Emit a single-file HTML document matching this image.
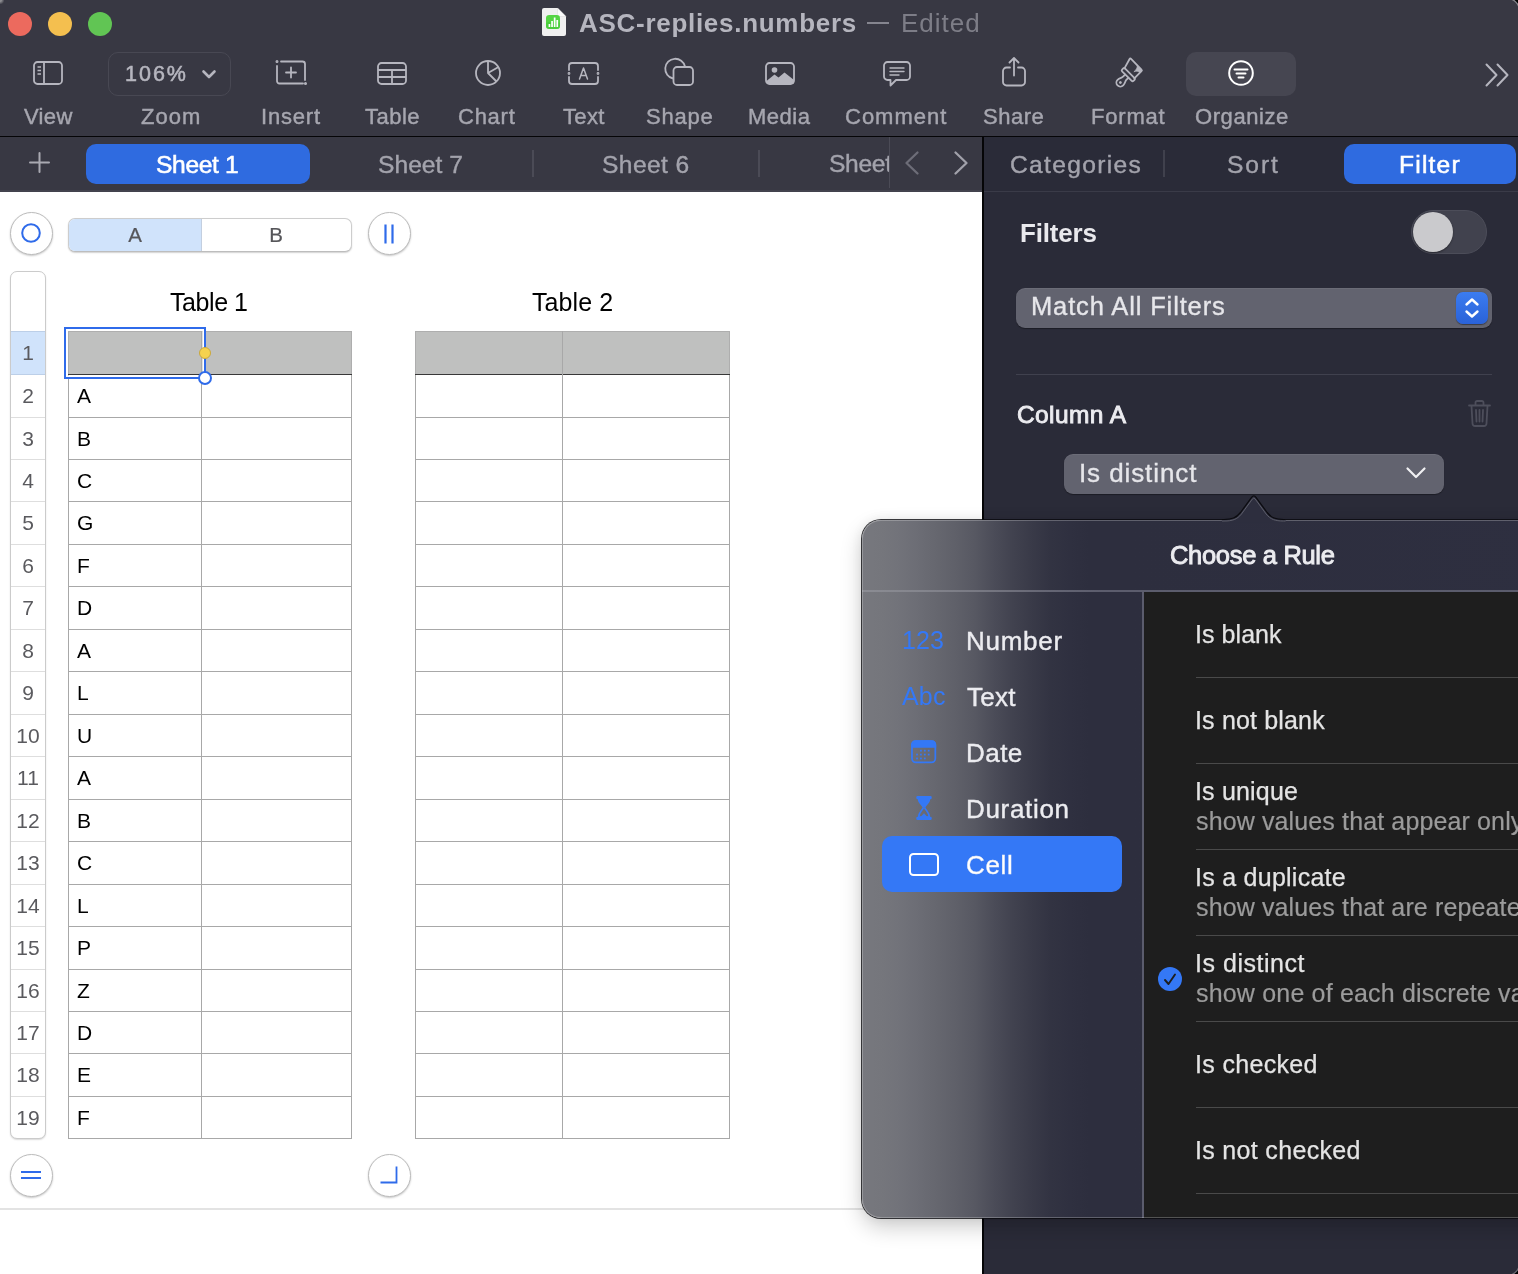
<!DOCTYPE html>
<html><head><meta charset="utf-8"><title>ASC-replies.numbers</title>
<style>
*{box-sizing:border-box;margin:0;padding:0}
html,body{width:1518px;height:1274px;overflow:hidden;background:#fff}
body{font-family:"Liberation Sans",sans-serif;position:relative;-webkit-font-smoothing:antialiased}
.abs{position:absolute}
.t{position:absolute;white-space:nowrap;line-height:1;will-change:transform}
#toolbar{left:0;top:0;width:1518px;height:136px;background:#383843}
#tabbar{left:0;top:137px;width:982px;height:54px;background:#383843}
#canvas{left:0;top:192px;width:982px;height:1082px;background:#fff}
#sidebar{left:984px;top:137px;width:534px;height:1137px;background:#2a2b38}
.tl{position:absolute;top:12px;width:24px;height:24px;border-radius:50%}
.lbl{font-size:22px;color:#a6a6af;top:106px;transform:translateX(-50%);-webkit-text-stroke:0.420px #a6a6af}
.tab{font-size:24.600px;color:#a3a3ac;top:152.600px;-webkit-text-stroke:0.400px #a3a3ac}
#s1,#filt{-webkit-text-stroke:0.550px #fff}
.cbtn{width:43px;height:43px;margin:-0.500px 0 0 -0.500px;border-radius:50%;background:#fff;border:1px solid #bcbcbc;box-shadow:0 1px 2px rgba(0,0,0,.22)}
.hdr{font-size:20.500px;color:#56565a;-webkit-text-stroke:0.200px #56565a}
.rn{font-size:21px;color:#5a5a5e;transform:translateX(-50%)}
.cv{font-size:21px;color:#000}
.ic{font-size:25px;color:#3478f6}
.li{font-size:26px;color:#ececf0;-webkit-text-stroke:0.400px #ececf0}
.ri{left:1196px;font-size:25px;color:#e4e4e4;-webkit-text-stroke:0.250px #e4e4e4}
.rs{left:1196px;letter-spacing:0.130px;font-size:25px;color:#9b9b9b;-webkit-text-stroke:0.200px #9b9b9b}
.sep{left:1196px;width:330px;height:1px;background:#4a4a4a}
svg{position:absolute;overflow:visible}
/*FIT*/
#title{left:579.00px!important;letter-spacing:0.711px;transform:none}
#edited{left:901.00px!important;letter-spacing:1.000px;transform:none}
#lview{left:24.33px!important;letter-spacing:0.333px;transform:none}
#lzoom{left:140.88px!important;letter-spacing:1.000px;transform:none}
#linsert{left:261.47px!important;letter-spacing:0.800px;transform:none}
#ltable{left:364.69px!important;letter-spacing:0.500px;transform:none}
#lchart{left:458.08px!important;letter-spacing:0.750px;transform:none}
#ltext{left:562.80px!important;letter-spacing:0.333px;transform:none}
#lshape{left:646.19px!important;letter-spacing:0.750px;transform:none}
#lmedia{left:748.02px!important;letter-spacing:0.500px;transform:none}
#lcomment{left:845.30px!important;letter-spacing:1.000px;transform:none}
#lshare{left:982.61px!important;letter-spacing:0.500px;transform:none}
#lformat{left:1090.83px!important;letter-spacing:0.800px;transform:none}
#lorganize{left:1195.36px!important;letter-spacing:0.571px;transform:none}
#zoomv{left:125.00px!important;letter-spacing:2.000px;transform:none}
#s1{left:156.00px!important;letter-spacing:-0.333px;transform:none}
#s7{left:378.10px!important;letter-spacing:0.033px;transform:none}
#s6{left:602.00px!important;letter-spacing:0.400px;transform:none}
#cat{left:1010.00px!important;letter-spacing:1.311px;transform:none}
#sort{left:1226.67px!important;letter-spacing:1.933px;transform:none}
#filt{left:1399.38px!important;letter-spacing:1.200px;transform:none}
#filters{left:1019.67px!important;letter-spacing:-0.167px;transform:none}
#maf{left:1031.26px!important;letter-spacing:0.863px;transform:none}
#cola{left:1017.00px!important;letter-spacing:0.400px;transform:none}
#isd{left:1079.00px!important;letter-spacing:0.900px;transform:none}
#car{left:1170.38px!important;letter-spacing:-0.317px;transform:none}
#i123{left:901.67px!important;letter-spacing:0.100px;transform:none}
#lnum{left:966.00px!important;letter-spacing:0.720px;transform:none}
#iabc{left:902.00px!important;letter-spacing:0.200px;transform:none}
#ltxt{left:967.00px!important;letter-spacing:0.267px;transform:none}
#ldat{left:966.00px!important;letter-spacing:0.467px;transform:none}
#ldur{left:966.00px!important;letter-spacing:0.686px;transform:none}
#lcel{left:966.00px!important;letter-spacing:0.667px;transform:none}
#r1{left:1195.00px!important;letter-spacing:0.057px;transform:none}
#r2{left:1195.00px!important;letter-spacing:0.164px;transform:none}
#r3{left:1195.00px!important;letter-spacing:0.175px;transform:none}
#r4{left:1195.00px!important;letter-spacing:0.262px;transform:none}
#r5{left:1195.00px!important;letter-spacing:0.520px;transform:none}
#r6{left:1195.00px!important;letter-spacing:0.333px;transform:none}
#r7{left:1195.00px!important;letter-spacing:0.323px;transform:none}
#t1{left:170.26px!important;letter-spacing:-0.433px;transform:none}
#t2{left:532.00px!important;letter-spacing:0.100px;transform:none}
/*/FIT*/
</style></head><body>
<div id="toolbar" class="abs"></div>
<div class="abs" style="left:0;top:135.500px;width:1518px;height:1.500px;background:#050507"></div>
<div id="tabbar" class="abs"></div>
<div id="canvas" class="abs"></div>
<div id="sidebar" class="abs"></div>
<!--TOOLBAR-->
<div class="tl" style="left:8px;background:#ec6a5e"></div>
<div class="tl" style="left:48px;background:#f4bf4f"></div>
<div class="tl" style="left:88px;background:#61c554"></div>
<!-- doc icon -->
<svg style="left:542px;top:8px" width="24" height="28" viewBox="0 0 24 28"><path d="M2 0h13.500l8.500 8.500v17.500a2 2 0 0 1-2 2h-20a2 2 0 0 1-2-2v-24a2 2 0 0 1 2-2z" fill="#f0f0f0"/><path d="M15.500 0l8.500 8.500h-6.500a2 2 0 0 1-2-2z" fill="#fbfbfb"/><path d="M15.500 6.500v-6.500l8.500 8.500h-6.500a2 2 0 0 1-2-2z" fill="none" stroke="#d8d8d8" stroke-width="0.500"/><rect x="4" y="7" width="14" height="14" rx="3.200" fill="#55d544"/><rect x="4" y="14" width="14" height="7" rx="3.200" fill="#3fc733" opacity="0.500"/><rect x="6.600" y="16" width="1.700" height="3" fill="#fff"/><rect x="9.200" y="13" width="1.700" height="6" fill="#fff"/><rect x="11.800" y="9.500" width="1.700" height="9.500" fill="#fff"/><rect x="14.400" y="12" width="1.700" height="7" fill="#fff"/></svg>
<div class="t" id="title" style="left:578px;top:10px;font-size:26px;font-weight:bold;color:#b5b5be">ASC-replies.numbers</div>
<div class="abs" style="left:867px;top:22px;width:22px;height:2px;background:#85858f"></div>
<div class="t" id="edited" style="left:902px;top:10px;font-size:26px;color:#7d7d87">Edited</div>
<!-- View -->
<svg style="left:33px;top:61px" width="30" height="24" viewBox="0 0 30 24" fill="none" stroke="#b6b6bf" stroke-width="1.800"><rect x="1" y="1" width="28" height="22" rx="3.500"/><path d="M11 1v22"/><path d="M4.500 6h3.500M4.500 9.500h3.500M4.500 13h3.500" stroke-width="1.500"/></svg>
<div class="t lbl" id="lview" style="left:48px">View</div>
<!-- Zoom -->
<div class="abs" style="left:108px;top:52px;width:123px;height:44px;border:1.500px solid #484853;border-radius:10px"></div>
<div class="t" id="zoomv" style="left:125px;top:63.500px;font-size:21.500px;color:#b6b6bf;-webkit-text-stroke:0.550px #b6b6bf">106%</div>
<svg style="left:202px;top:70px" width="14" height="9" viewBox="0 0 14 9" fill="none" stroke="#b6b6bf" stroke-width="2.600" stroke-linecap="round" stroke-linejoin="round"><path d="M1.500 1.500l5.500 5.500 5.500-5.500"/></svg>
<div class="t lbl" id="lzoom" style="left:170px">Zoom</div>
<!-- Insert -->
<svg style="left:276px;top:60px" width="31" height="25" viewBox="0 0 31 25" fill="none" stroke="#b6b6bf" stroke-width="1.800" stroke-linecap="round"><path d="M1 6v15a2.500 2.500 0 0 0 2.500 2.500h23.500M5 1.500h21.500a2.500 2.500 0 0 1 2.500 2.500v16"/><path d="M15 7.500v10M10 12.500h10"/><circle cx="1" cy="1.600" r="0.600" fill="#b6b6bf"/><circle cx="29.500" cy="23.500" r="0.600" fill="#b6b6bf"/></svg>
<div class="t lbl" id="linsert" style="left:292px">Insert</div>
<!-- Table -->
<svg style="left:377px;top:62px" width="30" height="23" viewBox="0 0 30 23" fill="none" stroke="#b6b6bf" stroke-width="1.800"><rect x="1" y="1" width="28" height="21" rx="3.500"/><path d="M1 8h28M1 15h28M15 8v14"/></svg>
<div class="t lbl" id="ltable" style="left:392px">Table</div>
<!-- Chart -->
<svg style="left:475px;top:60px" width="26" height="26" viewBox="0 0 26 26" fill="none" stroke="#b6b6bf" stroke-width="1.800" stroke-linejoin="round"><circle cx="13" cy="13" r="12"/><path d="M13 1v12l8.500 8.500M13 13l10.500-6"/></svg>
<div class="t lbl" id="lchart" style="left:488px">Chart</div>
<!-- Text -->
<svg style="left:568px;top:62px" width="31" height="23" viewBox="0 0 31 23" fill="none" stroke="#b6b6bf" stroke-width="1.800" stroke-linecap="round"><path d="M1 8v-4a3 3 0 0 1 3-3h23a3 3 0 0 1 3 3v4M1 15v4a3 3 0 0 0 3 3h23a3 3 0 0 0 3-3v-4"/><circle cx="1" cy="11.500" r="0.500" fill="#b6b6bf"/><circle cx="30" cy="11.500" r="0.500" fill="#b6b6bf"/><path d="M11.500 17l4-11 4 11M13 13.500h5" stroke-width="1.500" stroke-linejoin="round"/></svg>
<div class="t lbl" id="ltext" style="left:584px">Text</div>
<!-- Shape -->
<svg style="left:664px;top:58px" width="30" height="28" viewBox="0 0 30 28" fill="none" stroke="#b6b6bf" stroke-width="1.800"><path d="M9 20.500a10 10 0 1 1 12-12"/><rect x="9.500" y="9" width="19.500" height="18" rx="3.500"/></svg>
<div class="t lbl" id="lshape" style="left:680px">Shape</div>
<!-- Media -->
<svg style="left:765px;top:62px" width="30" height="23" viewBox="0 0 30 23"><rect x="1" y="1" width="28" height="21" rx="3.500" fill="none" stroke="#b6b6bf" stroke-width="1.800"/><circle cx="9.500" cy="8" r="2.800" fill="#b6b6bf"/><path d="M1.500 19l8-6.500 4 3 6-5 9.500 7.500v2.500a1.500 1.500 0 0 1-1.500 1.500h-24.500a1.500 1.500 0 0 1-1.500-1.500z" fill="#b6b6bf"/></svg>
<div class="t lbl" id="lmedia" style="left:780px">Media</div>
<!-- Comment -->
<svg style="left:883px;top:61px" width="28" height="26" viewBox="0 0 28 26" fill="none" stroke="#b6b6bf" stroke-width="1.800" stroke-linejoin="round" stroke-linecap="round"><path d="M4.500 1h19a3.500 3.500 0 0 1 3.500 3.500v11a3.500 3.500 0 0 1-3.500 3.500h-10.500l-5.500 5.500v-5.500h-3a3.500 3.500 0 0 1-3.500-3.500v-11a3.500 3.500 0 0 1 3.500-3.500z"/><path d="M7 7h14M7 10.500h14M7 14h9" stroke-width="1.400"/></svg>
<div class="t lbl" id="lcomment" style="left:896px">Comment</div>
<!-- Share -->
<svg style="left:1002px;top:57px" width="24" height="30" viewBox="0 0 24 30" fill="none" stroke="#b6b6bf" stroke-width="1.800" stroke-linecap="round" stroke-linejoin="round"><path d="M8 10.500h-3.500a3.500 3.500 0 0 0-3.500 3.500v11a3.500 3.500 0 0 0 3.500 3.500h15a3.500 3.500 0 0 0 3.500-3.500v-11a3.500 3.500 0 0 0-3.500-3.500h-3.500"/><path d="M12 18.500v-17M7.500 5.500l4.500-4.500 4.500 4.500"/></svg>
<div class="t lbl" id="lshare" style="left:1014px">Share</div>
<!-- Format -->
<svg style="left:1100px;top:48px" width="60" height="48" viewBox="0 0 60 48" fill="none" stroke="#b6b6bf" stroke-width="1.800" stroke-linejoin="round" stroke-linecap="round"><g transform="translate(20.400 34.600) rotate(45)"><path d="M-2.300 -9v3c0 1.800-1.700 3-1.700 6a4 4 0 0 0 8 0c0-3-1.700-4.200-1.700-6v-3"/><rect x="-8" y="-13.200" width="16" height="4" rx="1.200"/><path d="M-7.200 -12.900l-3-10.300q-0.300-1.200 0.900-1.200l15 0.300q1.100 0 1.100 1.100v10.100"/><path d="M0-24h6.500v3.300c-2 0-3.800 1.200-4.600 3.500 0.300-2.800-0.400-5-1.900-6.800z" fill="#b6b6bf" stroke-width="0.600"/><circle cx="0" cy="0" r="1.400" fill="#b6b6bf" stroke="none"/></g></svg>
<div class="t lbl" id="lformat" style="left:1128px">Format</div>
<!-- Organize -->
<div class="abs" style="left:1186px;top:52px;width:110px;height:44px;border-radius:10px;background:#464651"></div>
<svg style="left:1228px;top:60px" width="26" height="26" viewBox="0 0 26 26" fill="none" stroke="#fff" stroke-width="2" stroke-linecap="round"><circle cx="13" cy="13" r="11.800"/><path d="M6.500 9.500h13M8.500 13.500h9M10.500 17.500h5" stroke-width="2"/></svg>
<div class="t lbl" id="lorganize" style="left:1241px">Organize</div>
<!-- >> -->
<svg style="left:1485px;top:63px" width="24" height="24" viewBox="0 0 24 24" fill="none" stroke="#b6b6bf" stroke-width="2" stroke-linecap="round" stroke-linejoin="round"><path d="M1.500 1.500l10 10.500-10 10.500M12.500 1.500l10 10.500-10 10.500"/></svg>
<!--/TOOLBAR-->
<!--TABS-->
<div class="abs" style="left:0;top:190px;width:982px;height:1.700px;background:#43434d"></div>
<div class="abs" style="left:982px;top:137px;width:2px;height:1137px;background:#050507"></div>
<svg style="left:29px;top:152px" width="21" height="21" viewBox="0 0 21 21" stroke="#a9a9b2" stroke-width="2" stroke-linecap="round"><path d="M10.500 1v19M1 10.500h19"/></svg>
<div class="abs" style="left:86px;top:144px;width:224px;height:40px;border-radius:10px;background:#2f6be0"></div>
<div class="t tab" id="s1" style="left:157px;color:#fff">Sheet 1</div>
<div class="t tab" id="s7" style="left:378px">Sheet 7</div>
<div class="abs" style="left:532px;top:150px;width:1.600px;height:27px;background:#4b4b56"></div>
<div class="t tab" id="s6" style="left:601px">Sheet 6</div>
<div class="abs" style="left:758px;top:150px;width:1.600px;height:27px;background:#4b4b56"></div>
<div class="abs" style="left:800px;top:140px;width:89px;height:48px;overflow:hidden"><div class="t tab" id="s5" style="left:29px;top:12px;letter-spacing:-0.300px">Sheet 5</div></div>
<div class="abs" style="left:888.700px;top:137px;width:1.600px;height:51px;background:#4b4b56"></div>
<svg style="left:905px;top:151px" width="14" height="24" viewBox="0 0 14 24" fill="none" stroke="#6d6d78" stroke-width="2.300" stroke-linecap="round" stroke-linejoin="round"><path d="M12.500 1.500l-11 10.500 11 10.500"/></svg>
<svg style="left:954px;top:151px" width="14" height="24" viewBox="0 0 14 24" fill="none" stroke="#a1a1aa" stroke-width="2.300" stroke-linecap="round" stroke-linejoin="round"><path d="M1.500 1.500l11 10.500-11 10.500"/></svg>
<!-- sidebar tabs -->
<div class="abs" style="left:984px;top:190.500px;width:534px;height:1.400px;background:#3a3b48"></div>
<div class="t tab" id="cat" style="left:1010px">Categories</div>
<div class="abs" style="left:1163px;top:150px;width:1.600px;height:27px;background:#40414d"></div>
<div class="t tab" id="sort" style="left:1227px">Sort</div>
<div class="abs" style="left:1344px;top:144px;width:172px;height:40px;border-radius:10px;background:#2f6be0"></div>
<div class="t tab" id="filt" style="left:1401px;color:#fff">Filter</div>
<!--/TABS-->
<!--CANVAS-->
<div class="abs cbtn" style="left:10px;top:212px"></div>
<svg style="left:21px;top:223px" width="20" height="20" viewBox="0 0 20 20" fill="none" stroke="#2f6bea" stroke-width="2"><circle cx="10" cy="10" r="8.800"/></svg>
<div class="abs cbtn" style="left:368px;top:212px"></div>
<svg style="left:383px;top:224px" width="12" height="20" viewBox="0 0 12 20" stroke="#2f6bea" stroke-width="2.200" stroke-linecap="butt"><path d="M2.500 0.500v19M9.500 0.500v19"/></svg>
<div class="abs cbtn" style="left:10px;top:1154px"></div>
<svg style="left:21px;top:1170px" width="20" height="10" viewBox="0 0 20 10" stroke="#2f6bea" stroke-width="1.800"><path d="M0 2h20M0 8h20"/></svg>
<div class="abs cbtn" style="left:368px;top:1154px"></div>
<svg style="left:380px;top:1166px" width="18" height="18" viewBox="0 0 18 18" fill="none" stroke="#2f6bea" stroke-width="1.800"><path d="M0.500 16.500h16v-16"/></svg>
<div class="abs" style="left:68px;top:218px;width:284px;height:34px;border:1px solid #cdcdcd;border-bottom-color:#bdbdbd;border-radius:7px;background:#fff;box-shadow:0 1px 1.500px rgba(0,0,0,.18);overflow:hidden"><div class="abs" style="left:0;top:0;width:133px;height:32px;background:#d0e3fb;border-right:1px solid #c3cfe0"></div></div>
<div class="t hdr" id="ca" style="left:135px;top:225px;transform:translateX(-50%)">A</div>
<div class="t hdr" id="cb" style="left:276px;top:225px;transform:translateX(-50%)">B</div>
<div class="abs" style="left:10px;top:271px;width:36px;height:868px;border:1px solid #cbcbcb;border-radius:7px;background:#fff;box-shadow:0 1px 1.500px rgba(0,0,0,.15);overflow:hidden">
<div class="abs" style="left:0;top:59px;width:34px;height:44px;background:#d0e3fb;border-top:1px solid #bccfe8;border-bottom:1px solid #bccfe8"></div>
<div class="abs" style="left:0;top:145px;width:34px;height:1px;background:#dedede"></div>
<div class="abs" style="left:0;top:187px;width:34px;height:1px;background:#dedede"></div>
<div class="abs" style="left:0;top:229px;width:34px;height:1px;background:#dedede"></div>
<div class="abs" style="left:0;top:272px;width:34px;height:1px;background:#dedede"></div>
<div class="abs" style="left:0;top:314px;width:34px;height:1px;background:#dedede"></div>
<div class="abs" style="left:0;top:357px;width:34px;height:1px;background:#dedede"></div>
<div class="abs" style="left:0;top:399px;width:34px;height:1px;background:#dedede"></div>
<div class="abs" style="left:0;top:442px;width:34px;height:1px;background:#dedede"></div>
<div class="abs" style="left:0;top:484px;width:34px;height:1px;background:#dedede"></div>
<div class="abs" style="left:0;top:527px;width:34px;height:1px;background:#dedede"></div>
<div class="abs" style="left:0;top:569px;width:34px;height:1px;background:#dedede"></div>
<div class="abs" style="left:0;top:612px;width:34px;height:1px;background:#dedede"></div>
<div class="abs" style="left:0;top:654px;width:34px;height:1px;background:#dedede"></div>
<div class="abs" style="left:0;top:697px;width:34px;height:1px;background:#dedede"></div>
<div class="abs" style="left:0;top:739px;width:34px;height:1px;background:#dedede"></div>
<div class="abs" style="left:0;top:781px;width:34px;height:1px;background:#dedede"></div>
<div class="abs" style="left:0;top:824px;width:34px;height:1px;background:#dedede"></div>
</div>
<div class="t rn" style="left:28px;top:342.0px">1</div>
<div class="t rn" style="left:28px;top:385.0px">2</div>
<div class="t rn" style="left:28px;top:427.5px">3</div>
<div class="t rn" style="left:28px;top:469.5px">4</div>
<div class="t rn" style="left:28px;top:512.0px">5</div>
<div class="t rn" style="left:28px;top:554.5px">6</div>
<div class="t rn" style="left:28px;top:597.0px">7</div>
<div class="t rn" style="left:28px;top:639.5px">8</div>
<div class="t rn" style="left:28px;top:682.0px">9</div>
<div class="t rn" style="left:28px;top:724.5px">10</div>
<div class="t rn" style="left:28px;top:767.0px">11</div>
<div class="t rn" style="left:28px;top:809.5px">12</div>
<div class="t rn" style="left:28px;top:852.0px">13</div>
<div class="t rn" style="left:28px;top:894.5px">14</div>
<div class="t rn" style="left:28px;top:937.0px">15</div>
<div class="t rn" style="left:28px;top:979.5px">16</div>
<div class="t rn" style="left:28px;top:1021.5px">17</div>
<div class="t rn" style="left:28px;top:1064.0px">18</div>
<div class="t rn" style="left:28px;top:1106.5px">19</div>
<div class="t" id="t1" style="left:169px;top:290px;font-size:25px;color:#000">Table 1</div>
<div class="t" id="t2" style="left:531px;top:290px;font-size:25px;color:#000">Table 2</div>
<div class="abs" style="left:68px;top:331px;width:284px;height:808px;background:#fff;border:1px solid #a8a8a8"></div>
<div class="abs" style="left:68px;top:331px;width:284px;height:43px;background:#bfc0bf;border:1px solid #aeaeae;border-bottom:none"></div>
<div class="abs" style="left:68px;top:373.700px;width:284px;height:1.400px;background:#383838"></div>
<div class="abs" style="left:68px;top:417px;width:284px;height:1px;background:#a8a8a8"></div>
<div class="abs" style="left:68px;top:459px;width:284px;height:1px;background:#a8a8a8"></div>
<div class="abs" style="left:68px;top:501px;width:284px;height:1px;background:#a8a8a8"></div>
<div class="abs" style="left:68px;top:544px;width:284px;height:1px;background:#a8a8a8"></div>
<div class="abs" style="left:68px;top:586px;width:284px;height:1px;background:#a8a8a8"></div>
<div class="abs" style="left:68px;top:629px;width:284px;height:1px;background:#a8a8a8"></div>
<div class="abs" style="left:68px;top:671px;width:284px;height:1px;background:#a8a8a8"></div>
<div class="abs" style="left:68px;top:714px;width:284px;height:1px;background:#a8a8a8"></div>
<div class="abs" style="left:68px;top:756px;width:284px;height:1px;background:#a8a8a8"></div>
<div class="abs" style="left:68px;top:799px;width:284px;height:1px;background:#a8a8a8"></div>
<div class="abs" style="left:68px;top:841px;width:284px;height:1px;background:#a8a8a8"></div>
<div class="abs" style="left:68px;top:884px;width:284px;height:1px;background:#a8a8a8"></div>
<div class="abs" style="left:68px;top:926px;width:284px;height:1px;background:#a8a8a8"></div>
<div class="abs" style="left:68px;top:969px;width:284px;height:1px;background:#a8a8a8"></div>
<div class="abs" style="left:68px;top:1011px;width:284px;height:1px;background:#a8a8a8"></div>
<div class="abs" style="left:68px;top:1053px;width:284px;height:1px;background:#a8a8a8"></div>
<div class="abs" style="left:68px;top:1096px;width:284px;height:1px;background:#a8a8a8"></div>
<div class="abs" style="left:201px;top:331px;width:1px;height:807px;background:#a8a8a8"></div>
<div class="abs" style="left:415px;top:331px;width:315px;height:808px;background:#fff;border:1px solid #a8a8a8"></div>
<div class="abs" style="left:415px;top:331px;width:315px;height:43px;background:#bfc0bf;border:1px solid #aeaeae;border-bottom:none"></div>
<div class="abs" style="left:415px;top:373.700px;width:315px;height:1.400px;background:#383838"></div>
<div class="abs" style="left:415px;top:417px;width:315px;height:1px;background:#a8a8a8"></div>
<div class="abs" style="left:415px;top:459px;width:315px;height:1px;background:#a8a8a8"></div>
<div class="abs" style="left:415px;top:501px;width:315px;height:1px;background:#a8a8a8"></div>
<div class="abs" style="left:415px;top:544px;width:315px;height:1px;background:#a8a8a8"></div>
<div class="abs" style="left:415px;top:586px;width:315px;height:1px;background:#a8a8a8"></div>
<div class="abs" style="left:415px;top:629px;width:315px;height:1px;background:#a8a8a8"></div>
<div class="abs" style="left:415px;top:671px;width:315px;height:1px;background:#a8a8a8"></div>
<div class="abs" style="left:415px;top:714px;width:315px;height:1px;background:#a8a8a8"></div>
<div class="abs" style="left:415px;top:756px;width:315px;height:1px;background:#a8a8a8"></div>
<div class="abs" style="left:415px;top:799px;width:315px;height:1px;background:#a8a8a8"></div>
<div class="abs" style="left:415px;top:841px;width:315px;height:1px;background:#a8a8a8"></div>
<div class="abs" style="left:415px;top:884px;width:315px;height:1px;background:#a8a8a8"></div>
<div class="abs" style="left:415px;top:926px;width:315px;height:1px;background:#a8a8a8"></div>
<div class="abs" style="left:415px;top:969px;width:315px;height:1px;background:#a8a8a8"></div>
<div class="abs" style="left:415px;top:1011px;width:315px;height:1px;background:#a8a8a8"></div>
<div class="abs" style="left:415px;top:1053px;width:315px;height:1px;background:#a8a8a8"></div>
<div class="abs" style="left:415px;top:1096px;width:315px;height:1px;background:#a8a8a8"></div>
<div class="abs" style="left:562px;top:331px;width:1px;height:807px;background:#a8a8a8"></div>
<div class="t cv" style="left:77px;top:384.9px">A</div>
<div class="t cv" style="left:77px;top:427.9px">B</div>
<div class="t cv" style="left:77px;top:469.9px">C</div>
<div class="t cv" style="left:77px;top:511.9px">G</div>
<div class="t cv" style="left:77px;top:554.9px">F</div>
<div class="t cv" style="left:77px;top:596.9px">D</div>
<div class="t cv" style="left:77px;top:639.9px">A</div>
<div class="t cv" style="left:77px;top:681.9px">L</div>
<div class="t cv" style="left:77px;top:724.9px">U</div>
<div class="t cv" style="left:77px;top:766.9px">A</div>
<div class="t cv" style="left:77px;top:809.9px">B</div>
<div class="t cv" style="left:77px;top:851.9px">C</div>
<div class="t cv" style="left:77px;top:894.9px">L</div>
<div class="t cv" style="left:77px;top:936.9px">P</div>
<div class="t cv" style="left:77px;top:979.9px">Z</div>
<div class="t cv" style="left:77px;top:1021.9px">D</div>
<div class="t cv" style="left:77px;top:1063.9px">E</div>
<div class="t cv" style="left:77px;top:1106.9px">F</div>
<div class="abs" style="left:64px;top:327px;width:142px;height:52px;border:2px solid #2f6bea;box-shadow:inset 0 0 0 1.500px #fff"></div>
<div class="abs" style="left:199px;top:347px;width:12px;height:12px;border-radius:50%;background:#f5d24e;border:1px solid #caa83c"></div>
<div class="abs" style="left:198px;top:371px;width:14px;height:14px;border-radius:50%;background:#fff;border:2px solid #2f6bea"></div>
<div class="abs" style="left:0;top:1208px;width:982px;height:2px;background:#e3e3e3"></div>
<!--/CANVAS-->
<!--SIDEBAR-->
<div class="t" id="filters" style="left:1020px;top:219.500px;font-size:26px;font-weight:bold;color:#e9e9ed">Filters</div>
<div class="abs" style="left:1411px;top:210px;width:76px;height:44px;border-radius:22px;background:#41424e;border:1px solid #4c4d59"></div>
<div class="abs" style="left:1413px;top:212px;width:40px;height:40px;border-radius:50%;background:#cacacd;box-shadow:0 1px 2px rgba(0,0,0,.4)"></div>
<div class="abs" style="left:1016px;top:288px;width:476px;height:40px;border-radius:9px;background:#62636f;box-shadow:0 1px 1px rgba(0,0,0,.35), inset 0 1px 0 rgba(255,255,255,.06)"></div>
<div class="t" id="maf" style="left:1032px;top:294px;font-size:25.500px;color:#e6e6ea;-webkit-text-stroke:0.350px #e6e6ea">Match All Filters</div>
<div class="abs" style="left:1456px;top:292px;width:32px;height:32px;border-radius:7px;background:linear-gradient(#3b7cf0,#2a62d8);box-shadow:0 0.500px 1px rgba(0,0,0,.4)"></div>
<svg style="left:1464px;top:297px" width="16" height="22" viewBox="0 0 16 22" fill="none" stroke="#fff" stroke-width="2.400" stroke-linecap="round" stroke-linejoin="round"><path d="M2.500 7.500l5.500-5 5.500 5M2.500 14.500l5.500 5 5.500-5"/></svg>
<div class="abs" style="left:1016px;top:374px;width:476px;height:1px;background:#40414e"></div>
<div class="t" id="cola" style="left:1016px;top:402.800px;font-size:24.500px;color:#ececf0;-webkit-text-stroke:0.900px #ececf0">Column A</div>
<svg style="left:1468px;top:400px" width="23" height="27" viewBox="0 0 23 27" fill="none" stroke="#4d4e5b" stroke-width="1.800" stroke-linecap="round" stroke-linejoin="round"><path d="M1 5.500h21M7.500 5v-2.500a1.500 1.500 0 0 1 1.500-1.500h5a1.500 1.500 0 0 1 1.500 1.500v2.500M3.500 6l1 17.500a2.500 2.500 0 0 0 2.500 2.500h9a2.500 2.500 0 0 0 2.500-2.500l1-17.500M8 10l0.500 11.500M11.500 10v11.500M15 10l-0.500 11.500"/></svg>
<div class="abs" style="left:1064px;top:454px;width:380px;height:40px;border-radius:9px;background:#62636f;box-shadow:0 1px 1px rgba(0,0,0,.35), inset 0 1px 0 rgba(255,255,255,.06)"></div>
<div class="t" id="isd" style="left:1080px;top:459.800px;font-size:26px;color:#e6e6ea;-webkit-text-stroke:0.350px #e6e6ea">Is distinct</div>
<svg style="left:1406px;top:467px" width="20" height="12" viewBox="0 0 20 12" fill="none" stroke="#f0f0f2" stroke-width="2.200" stroke-linecap="round" stroke-linejoin="round"><path d="M1.500 1.500l8.500 8.500 8.500-8.500"/></svg>
<!--/SIDEBAR-->
<!--POPOVER-->
<div class="abs" id="pop" style="left:862px;top:520px;width:720px;height:698px;border-radius:19px;box-shadow:0 0 0 1px rgba(10,10,14,.8), 0 9px 22px rgba(0,0,0,.2), 0 0 12px rgba(0,0,0,.07);overflow:hidden;background:linear-gradient(90deg,#77787e 0,#75767c 20px,#72737a 36px,#6c6d75 56px,#66676f 74px,#5f6069 94px,#575862 113px,#4b4c58 132px,#41424f 151px,#393a48 170px,#323342 189px,#2f3040 208px,#2d2e3e 227px,#2d2e3e 265px,#2e2f40 100%)">
<div class="abs" style="left:0;top:0;width:720px;height:71px;background:linear-gradient(90deg,rgba(44,45,61,0) 0,rgba(44,45,61,0) 281px,rgba(44,45,61,0) 100%)"></div>
<div class="abs" style="left:0;top:70px;width:720px;height:2px;background:linear-gradient(90deg,#8b8c93 0,#84858d 60px,#777882 120px,#666775 180px,#5c5d6d 240px,#5b5c6d 100%)"></div>
<div class="abs" style="left:280px;top:72px;width:2px;height:626px;background:#5b5c6d"></div>
<div class="abs" style="left:282px;top:72px;width:438px;height:626px;background:#1e1e1e"></div>
<div class="abs" style="left:0;top:0;width:720px;height:698px;border-radius:19px;border:1px solid rgba(255,255,255,.24)"></div>
</div>
<!-- arrow -->
<svg style="left:1224px;top:495px" width="60" height="28" viewBox="0 0 60 28"><path d="M-2 24.500h2C8 24.500 12 23 16.500 17.500L27.600 2.300Q29.800 -0.500 32 2.300L43.100 17.500C47.600 23 51.600 24.500 59.600 24.500h2v3h-64z" fill="#2d2e3e" stroke="none"/><path d="M-2 24.500h2C8 24.500 12 23 16.500 17.500L27.600 2.300Q29.800 -0.500 32 2.300L43.100 17.500C47.600 23 51.600 24.500 59.600 24.500h2" fill="none" stroke="#0b0b0f" stroke-width="1.200"/><path d="M-2 26h2C8.500 26 13 24.500 17.500 19L28.400 4Q29.800 2.200 31.200 4L42.100 19C46.600 24.500 51.100 26 59.600 26h2" fill="none" stroke="#5c5d69" stroke-width="1"/></svg>
<div class="t" id="car" style="left:1170px;top:543px;font-size:25.500px;color:#ececf0;-webkit-text-stroke:0.900px #ececf0">Choose a Rule</div>
<!-- left list -->
<div class="abs" style="left:882px;top:836px;width:240px;height:56px;border-radius:10px;background:#3478f6"></div>
<div class="t ic" id="i123" style="left:903px;top:628px">123</div>
<div class="t li" id="lnum" style="left:966px;top:628px">Number</div>
<div class="t ic" id="iabc" style="left:902px;top:684px">Abc</div>
<div class="t li" id="ltxt" style="left:966px;top:684px">Text</div>
<svg style="left:911px;top:740.300px" width="25.300" height="23.500" viewBox="0 0 26 24" fill="none" stroke="#3478f6" stroke-width="1.800"><rect x="1" y="1" width="24" height="22" rx="4"/><path d="M1 4.500a3.500 3.500 0 0 1 3.500-3.500h17a3.500 3.500 0 0 1 3.500 3.500v2.500h-24z" fill="#3478f6"/><g fill="#3478f6" stroke="none"><rect x="9.300" y="10" width="1.800" height="1.800"/><rect x="13.300" y="10" width="1.800" height="1.800"/><rect x="17.300" y="10" width="1.800" height="1.800"/><rect x="5.300" y="14" width="1.800" height="1.800"/><rect x="9.300" y="14" width="1.800" height="1.800"/><rect x="13.300" y="14" width="1.800" height="1.800"/><rect x="17.300" y="14" width="1.800" height="1.800"/><rect x="5.300" y="18" width="1.800" height="1.800"/><rect x="9.300" y="18" width="1.800" height="1.800"/><rect x="13.300" y="18" width="1.800" height="1.800"/></g></svg>
<div class="t li" id="ldat" style="left:966px;top:740px">Date</div>
<svg style="left:915.500px;top:796.300px" width="16" height="24" viewBox="0 0 16 24" fill="#3478f6" stroke="none"><rect x="0.300" y="0" width="15.400" height="3.200" rx="1.300"/><path d="M1.800 3h12.400c0 4.200-3.600 5.800-5 8.800h-2.400c-1.400-3-5-4.600-5-8.800z"/><path d="M7.400 11.500c-1.200 3-4.700 4.800-4.700 9.500h10.600c0-4.700-3.500-6.500-4.700-9.500" fill="none" stroke="#3478f6" stroke-width="1.700"/><path d="M8 17.300l3.400 3.700h-6.800z"/><rect x="0.300" y="20.800" width="15.400" height="3.200" rx="1.300"/></svg>
<div class="t li" id="ldur" style="left:966px;top:796px">Duration</div>
<svg style="left:909px;top:853px" width="30" height="23" viewBox="0 0 30 23" fill="none" stroke="#fff" stroke-width="2"><rect x="1" y="1" width="28" height="21" rx="3.500"/></svg>
<div class="t li" id="lcel" style="left:966px;top:852px;color:#fff">Cell</div>
<!-- right list -->
<div class="t ri" id="r1" style="top:622px">Is blank</div>
<div class="abs sep" style="top:677px"></div>
<div class="t ri" id="r2" style="top:708px">Is not blank</div>
<div class="abs sep" style="top:763px"></div>
<div class="t ri" id="r3" style="top:778.700px">Is unique</div>
<div class="t rs" id="r3s" style="top:809px">show values that appear only once</div>
<div class="abs sep" style="top:849px"></div>
<div class="t ri" id="r4" style="top:864.700px">Is a duplicate</div>
<div class="t rs" id="r4s" style="top:894.500px">show values that are repeated</div>
<div class="abs sep" style="top:935px"></div>
<div class="abs" style="left:1158px;top:967px;width:24px;height:24px;border-radius:50%;background:#3478f6"></div>
<svg style="left:1163px;top:973px" width="14" height="13" viewBox="0 0 14 13" fill="none" stroke="#1e1e1e" stroke-width="1.900" stroke-linecap="round" stroke-linejoin="round"><path d="M2 7l3.500 4 6.500-9.500"/></svg>
<div class="t ri" id="r5" style="top:950.700px">Is distinct</div>
<div class="t rs" id="r5s" style="top:981px;letter-spacing:0.180px">show one of each discrete value</div>
<div class="abs sep" style="top:1021px"></div>
<div class="t ri" id="r6" style="top:1052px">Is checked</div>
<div class="abs sep" style="top:1107px"></div>
<div class="t ri" id="r7" style="top:1138px">Is not checked</div>
<div class="abs sep" style="top:1193px"></div>
<!--/POPOVER-->
<!--CORNERS-->
<div class="abs" style="left:0;top:0;width:6px;height:6px;background:radial-gradient(circle at 0 0,#8c8c90 0,#8c8c90 1.500px,rgba(140,140,144,0) 4.500px)"></div>
<svg style="left:1508px;top:0" width="10" height="10" viewBox="0 0 10 10"><path d="M6.500 0h3.500v3.500z" fill="#000"/><path d="M4 -0.500q4 1.500 6.500 6.500" fill="none" stroke="#85858a" stroke-width="1.300"/></svg>
<svg style="left:1508px;top:1264px" width="10" height="10" viewBox="0 0 10 10"><path d="M10 6.500v3.500h-3.500z" fill="#000"/><path d="M10.500 4q-1.500 4-6.500 6.500" fill="none" stroke="#6a6a72" stroke-width="1.200"/></svg>
<!--/CORNERS-->
</body></html>
